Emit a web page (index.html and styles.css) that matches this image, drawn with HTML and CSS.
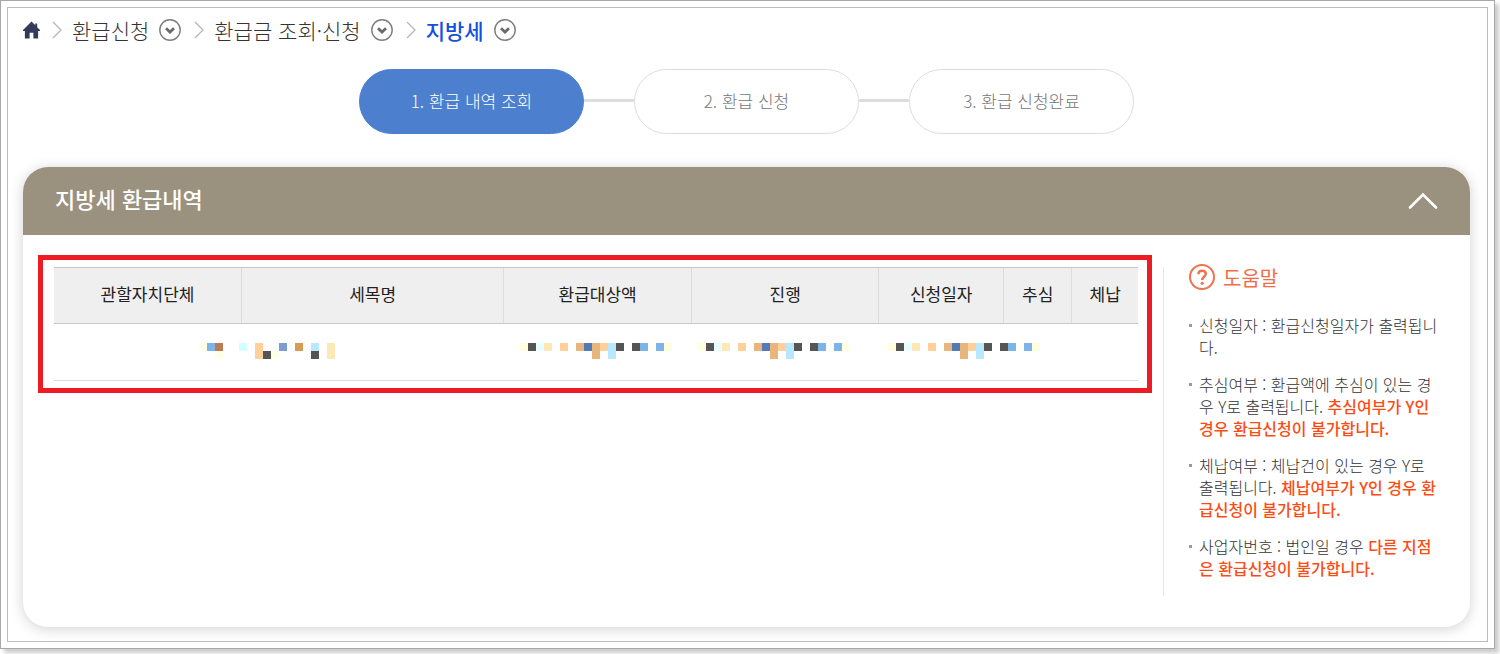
FILE: index.html
```
<!DOCTYPE html>
<html lang="ko">
<head>
  <meta charset="UTF-8">
  <meta name="viewport" content="width=device-width, initial-scale=1.0">
  <title>지방세 환급내역</title>
  <link rel="stylesheet" href="styles.css">
</head>
<body>
<svg class="defs" aria-hidden="true">
  <symbol id="chevron" viewBox="0 0 10 18">
    <path d="M1 1l8 8-8 8" fill="none" stroke="#b4b4b4" stroke-width="1.2"/>
  </symbol>
  <symbol id="more" viewBox="0 0 22 22">
    <circle cx="11" cy="11" r="10.2" fill="none" stroke="#7c7c7c" stroke-width="1.4"/>
    <path d="M7 9.2l4 3.800 4-3.800" fill="none" stroke="#6a6a6a" stroke-width="2.800"/>
  </symbol>
  <symbol id="mask" viewBox="0 0 19 2">
    <path fill="#ffffe0" d="M0 0h1v1H0zM18 0h1v1h-1z"/>
    <path fill="#555555" d="M1 0h1v1H1zM12 0h1v1h-1zM14 0h1v1h-1z"/>
    <path fill="#e6ffff" d="M2 0h1v1H2z"/>
    <path fill="#ffe8b8" d="M3 0h1v1H3z"/>
    <path fill="#ffd09c" d="M5 0h1v1H5zM10 0h1v1h-1z"/>
    <path fill="#e8b67c" d="M7 0h1v1H7zM9 0h1v2H9z"/>
    <path fill="#547ab8" d="M8 0h1v1H8z"/>
    <path fill="#b8e8ff" d="M11 0h1v2h-1z"/>
    <path fill="#7cb4e8" d="M15 0h1v1h-1zM17 0h1v1h-1z"/>
  </symbol>
</svg>

<div class="window">
  <div class="page">
    <nav class="breadcrumb">
      <a href="#" class="home" aria-label="홈">
        <svg width="18" height="18" viewBox="0 0 18 18"><path fill="#323b5a" d="M9 0L0 9v1h2v8h5v-6h4v6h5v-8h2V9l-3-3V2h-2v2z"/></svg>
      </a>
      <svg class="chevron"><use href="#chevron"/></svg>
      <a href="#">환급신청</a>
      <button class="more" aria-label="환급신청 메뉴"><svg><use href="#more"/></svg></button>
      <svg class="chevron"><use href="#chevron"/></svg>
      <a href="#">환급금 조회·신청</a>
      <button class="more" aria-label="환급금 메뉴"><svg><use href="#more"/></svg></button>
      <svg class="chevron"><use href="#chevron"/></svg>
      <a href="#" class="current">지방세</a>
      <button class="more" aria-label="지방세 메뉴"><svg><use href="#more"/></svg></button>
    </nav>

    <ol class="steps">
      <li class="active">1. 환급 내역 조회</li>
      <li>2. 환급 신청</li>
      <li>3. 환급 신청완료</li>
    </ol>

    <section class="card">
      <div class="card-header">
        <h2>지방세 환급내역</h2>
        <button class="toggle" aria-label="접기">
          <svg width="30" height="18" viewBox="0 0 30 18"><path d="M2 15.500L15 2.500l13 13" fill="none" stroke="#fff" stroke-width="2.600" stroke-linecap="round"/></svg>
        </button>
      </div>
      <div class="card-body">
        <div class="result">
          <table>
            <colgroup>
              <col class="col-org"><col class="col-tax"><col class="col-amount"><col class="col-state">
              <col class="col-date"><col class="col-collect"><col class="col-arrears">
            </colgroup>
            <thead>
              <tr>
                <th>관할자치단체</th>
                <th>세목명</th>
                <th>환급대상액</th>
                <th>진행</th>
                <th>신청일자</th>
                <th>추심</th>
                <th>체납</th>
              </tr>
            </thead>
            <tbody>
              <tr>
                <td colspan="2" class="shift">
                  <svg class="mask-short" viewBox="0 0 17 2">
                    <path fill="#ffffe6" d="M0 0h1v1H0zM2 1h1v1H2zM9 1h1v1H9z"/>
                    <path fill="#7cb4e8" d="M1 0h1v1H1z"/>
                    <path fill="#b87c54" d="M2 0h1v1H2z"/>
                    <path fill="#d2ffff" d="M5 0h1v1H5z"/>
                    <path fill="#ffd09c" d="M7 0h1v2H7z"/>
                    <path fill="#555555" d="M8 1h1v1H8zM14 1h1v1h-1z"/>
                    <path fill="#7c9cd4" d="M10 0h1v1h-1z"/>
                    <path fill="#d49c54" d="M12 0h1v1h-1z"/>
                    <path fill="#b8e8ff" d="M14 0h1v1h-1z"/>
                    <path fill="#ffe8b8" d="M16 0h1v2h-1z"/>
                  </svg>
                </td>
                <td class="amount"><svg class="mask"><use href="#mask"/></svg></td>
                <td class="shift"><svg class="mask"><use href="#mask"/></svg></td>
                <td colspan="2" class="shift"><svg class="mask"><use href="#mask"/></svg></td>
                <td></td>
              </tr>
            </tbody>
          </table>
        </div>

        <aside class="help">
          <h3>
            <svg width="26" height="26" viewBox="0 0 26 26" fill="none" stroke="#ee7350">
              <circle cx="13" cy="13" r="12" stroke-width="2"/>
              <path d="M9.300 10.200C9.300 7.800 10.900 6.700 13 6.700s3.800 1.200 3.800 3.200c0 2.700-3.600 3-3.600 6" stroke-width="2.400"/>
              <circle cx="13.200" cy="19.300" r="1.600" fill="#ee7350" stroke="none"/>
            </svg>
            도움말
          </h3>
          <ul>
            <li>신청일자 : 환급신청일자가 출력됩니다.</li>
            <li>추심여부 : 환급액에 추심이 있는 경우 Y로 출력됩니다. <strong>추심여부가 Y인 경우 환급신청이 불가합니다.</strong></li>
            <li>체납여부 : 체납건이 있는 경우 Y로 출력됩니다. <strong>체납여부가 Y인 경우 환급신청이 불가합니다.</strong></li>
            <li>사업자번호 : 법인일 경우 <strong>다른 지점은 환급신청이 불가합니다.</strong></li>
          </ul>
        </aside>
      </div>
    </section>
  </div>
</div>
</body>
</html>
```
FILE: styles.css
```
* { margin: 0; padding: 0; box-sizing: border-box; }
body {
  font-family: "Noto Sans CJK KR", sans-serif;
  font-size: 16px;
  font-weight: 300;
  color: #333;
  background: #fff;
  overflow: hidden;
}
a { color: inherit; text-decoration: none; }
button { background: none; border: none; cursor: pointer; }
svg { display: block; }
.defs { position: absolute; width: 0; height: 0; }

.window {
  margin: 0 5px 5px 0;
  padding: 6px;
  border: 1px solid #a8a8a8;
  background: #fff;
  box-shadow: 4px 4px 4px rgba(0,0,0,0.2);
}
.page {
  border: 1px solid #bdbdbd;
  padding: 6px 17px 14px 15px;
}

/* breadcrumb */
.breadcrumb {
  display: flex;
  align-items: center;
  height: 30px;
  padding-top: 1px;
  font-size: 21px;
  line-height: 28px;
}
.home { width: 16px; }
.home svg { width: 17px; }
.breadcrumb .chevron { width: 10px; height: 18px; margin: 0 10px 0 13px; }
.breadcrumb .more { width: 22px; height: 22px; margin-left: 10px; }
.more svg { width: 22px; height: 22px; }
.current { color: #1450e0; font-weight: 500; }

/* steps */
.steps {
  display: flex;
  justify-content: center;
  gap: 50px;
  margin: 25px 0 33px;
  list-style: none;
}
.steps li {
  position: relative;
  width: 225px;
  height: 65px;
  border: 1px solid #ddd;
  border-radius: 33px;
  font-size: 17px;
  line-height: 61px;
  text-align: center;
  color: #777;
}
.steps li + li::before {
  content: "";
  position: absolute;
  right: 100%;
  top: 29px;
  width: 50px;
  height: 3px;
  margin-right: 1px;
  background: #ddd;
}
.steps .active { background: #4d7fcf; border-color: #4d7fcf; color: #fff; }

/* card */
.card {
  border-radius: 25px;
  box-shadow: 0 2px 14px rgba(0,0,0,0.18);
}
.card-header {
  display: flex;
  justify-content: space-between;
  align-items: center;
  height: 68px;
  padding: 0 32px;
  border-radius: 25px 25px 0 0;
  background: #9b917f;
  color: #fff;
}
.card-header h2 { padding-bottom: 6px; font-size: 22px; line-height: 32px; font-weight: 500; }
.card-body {
  display: flex;
  align-items: flex-start;
  padding: 20px 32px 31px 15px;
}

/* table */
.result {
  flex: 1;
  padding: 7px 9px 7px 11px;
  border: 5px solid #ed1c24;
}
.result table { width: 100%; border-collapse: collapse; table-layout: fixed; }
.result th {
  height: 56px;
  padding-bottom: 4px;
  background: #efefef;
  border-top: 1px solid #c8c8c8;
  border-bottom: 1px solid #c8c8c8;
  font-size: 17px;
  line-height: 24px;
  font-weight: 400;
  color: #222;
}
.result th + th { border-left: 1px solid #dcdcdc; }
.result td { height: 57px; padding-bottom: 2px; border-bottom: 1px solid #dcdcdc; }
.result td.shift { padding-right: 23px; }
.result td.amount { padding-right: 3px; }
.result td svg { height: 16px; margin: 0 auto; }
.mask { width: 152px; }
.mask-short { width: 136px; }
.col-org, .col-amount, .col-state { width: 17.3%; }
.col-tax { width: 24.2%; }
.col-date { width: 11.5%; }
.col-collect { width: 6.3%; }
.col-arrears { width: 6.1%; }

/* help */
.help {
  width: 275px;
  margin: 12px 0 0 11px;
  padding: 0 0 17px 25px;
  border-left: 1px solid #e5e5e5;
}
.help h3 {
  display: flex;
  align-items: center;
  gap: 8px;
  height: 20px;
  margin-bottom: 27px;
  font-size: 20px;
  font-weight: 400;
  color: #f26c45;
}
.help ul { list-style: none; }
.help li {
  position: relative;
  padding-left: 10px;
  line-height: 22px;
}
.help li + li { margin-top: 15px; }
.help li::before {
  content: "";
  position: absolute;
  left: 0;
  top: 10px;
  width: 3px;
  height: 3px;
  background: #999;
}
.help strong { font-weight: 500; color: #fc4c14; }
```
